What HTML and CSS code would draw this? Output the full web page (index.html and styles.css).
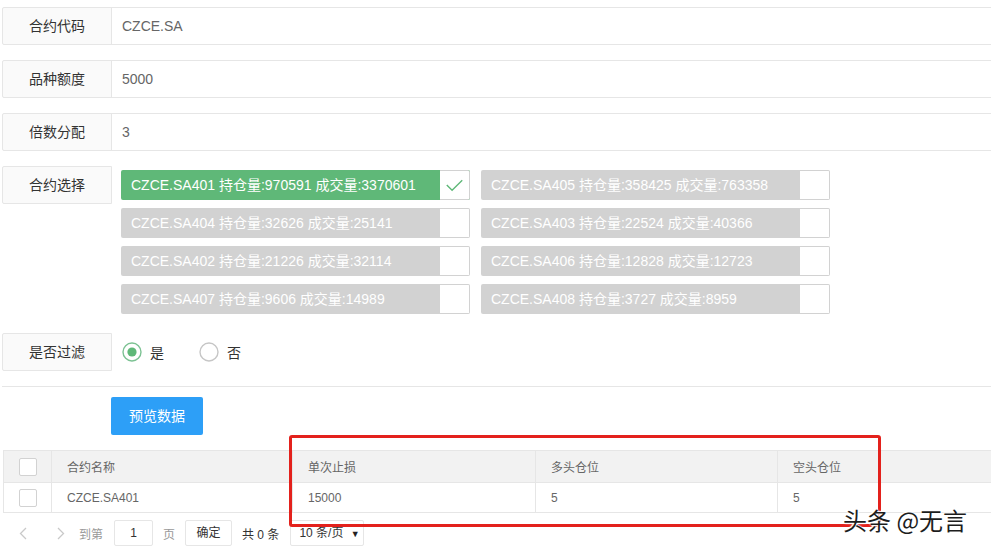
FILE: index.html
```html
<!DOCTYPE html>
<html lang="zh-CN">
<head>
<meta charset="utf-8">
<title>合约设置</title>
<link rel="stylesheet" href="styles.css">
</head>
<body>
<div class="page">
  <form class="form">
    <div class="form-item">
      <label class="form-label">合约代码</label>
      <div class="input">CZCE.SA</div>
    </div>
    <div class="form-item">
      <label class="form-label">品种额度</label>
      <div class="input">5000</div>
    </div>
    <div class="form-item">
      <label class="form-label">倍数分配</label>
      <div class="input">3</div>
    </div>
    <div class="form-item">
      <label class="form-label">合约选择</label>
      <div class="checks">
        <div class="check checked"><span class="check-text">CZCE.SA401 持仓量:970591 成交量:3370601</span><i class="check-box"><svg width="30" height="28" viewBox="0 0 30 28"><polyline points="7,14 12.5,19.5 23,9" fill="none" stroke="#5FB878" stroke-width="1.4"/></svg></i></div>
        <div class="check"><span class="check-text">CZCE.SA405 持仓量:358425 成交量:763358</span><i class="check-box"></i></div>
        <div class="check"><span class="check-text">CZCE.SA404 持仓量:32626 成交量:25141</span><i class="check-box"></i></div>
        <div class="check"><span class="check-text">CZCE.SA403 持仓量:22524 成交量:40366</span><i class="check-box"></i></div>
        <div class="check"><span class="check-text">CZCE.SA402 持仓量:21226 成交量:32114</span><i class="check-box"></i></div>
        <div class="check"><span class="check-text">CZCE.SA406 持仓量:12828 成交量:12723</span><i class="check-box"></i></div>
        <div class="check"><span class="check-text">CZCE.SA407 持仓量:9606 成交量:14989</span><i class="check-box"></i></div>
        <div class="check"><span class="check-text">CZCE.SA408 持仓量:3727 成交量:8959</span><i class="check-box"></i></div>
      </div>
    </div>
    <div class="form-item">
      <label class="form-label">是否过滤</label>
      <div class="radios">
        <span class="radio"><svg width="20" height="20" viewBox="0 0 20 20"><circle cx="10" cy="10" r="9" fill="none" stroke="#7cc293" stroke-width="1.4"/><circle cx="10" cy="10" r="4.6" fill="#5FB878"/></svg><span class="radio-text">是</span></span>
        <span class="radio"><svg width="20" height="20" viewBox="0 0 20 20"><circle cx="10" cy="10" r="9" fill="none" stroke="#c6c6c6" stroke-width="1.4"/></svg><span class="radio-text">否</span></span>
      </div>
    </div>
    <hr class="sep">
    <div class="btn-row"><button type="button" class="btn">预览数据</button></div>
  </form>

  <div class="table-wrap">
    <table class="table">
      <colgroup><col class="c0"><col class="c1"><col class="c2"><col class="c3"><col class="c4"></colgroup>
      <thead>
        <tr><th class="cb-cell"><span class="cb"></span></th><th>合约名称</th><th>单次止损</th><th>多头仓位</th><th>空头仓位</th></tr>
      </thead>
      <tbody>
        <tr><td class="cb-cell"><span class="cb"></span></td><td>CZCE.SA401</td><td>15000</td><td>5</td><td>5</td></tr>
      </tbody>
    </table>
    <div class="pager">
      <span class="pg-arrow"><svg width="8" height="13" viewBox="0 0 8 13"><polyline points="7,1 1.5,6.5 7,12" fill="none" stroke="#c9c9c9" stroke-width="1.3"/></svg></span>
      <span class="pg-arrow next"><svg width="8" height="13" viewBox="0 0 8 13"><polyline points="1,1 6.5,6.5 1,12" fill="none" stroke="#c9c9c9" stroke-width="1.3"/></svg></span>
      <span class="pg-text">到第</span>
      <span class="pg-input">1</span>
      <span class="pg-text">页</span>
      <span class="pg-btn">确定</span>
      <span class="pg-count">共 0 条</span>
      <span class="pg-select">10 条/页 <span class="caret">▼</span></span>
    </div>
  </div>

  <div class="annot"></div>
  <div class="watermark">头条 @无言</div>
</div>
</body>
</html>
```

FILE: styles.css
```css
html, body {
  margin: 0;
  padding: 0;
  overflow: hidden;
  background: #fff;
}
body {
  font-family: "Liberation Sans", "Noto Sans CJK SC", sans-serif;
  font-size: 14px;
  color: #333;
}
.page {
  position: relative;
  width: 991px;
  height: 551px;
  overflow: hidden;
}
.form {
  padding: 7px 0 0 2px;
  width: 1200px;
}
.form-item {
  display: flex;
  align-items: flex-start;
  margin-bottom: 15px;
}
.form-label {
  box-sizing: border-box;
  width: 110px;
  height: 38px;
  line-height: 20px;
  padding: 8px 0;
  text-align: center;
  background: #fafafa;
  border: 1px solid #e6e6e6;
  border-radius: 2px 0 0 2px;
  flex: none;
  color: #333;
}
.input {
  box-sizing: border-box;
  flex: 1;
  height: 38px;
  line-height: 36px;
  margin-left: -1px;
  padding-left: 10px;
  border: 1px solid #e6e6e6;
  color: #666;
}
.checks {
  display: grid;
  grid-template-columns: 349px 349px;
  column-gap: 11px;
  row-gap: 8px;
  margin: 4px 0 4px 9px;
}
.check {
  display: flex;
  height: 30px;
  border-radius: 2px;
  background: #d2d2d2;
  overflow: hidden;
}
.check.checked {
  background: #5FB878;
}
.check-text {
  flex: 1;
  padding-left: 10px;
  line-height: 30px;
  color: #fff;
  white-space: nowrap;
  overflow: hidden;
}
.check-box {
  box-sizing: border-box;
  width: 30px;
  height: 30px;
  flex: none;
  background: #fff;
  border: 1px solid #d2d2d2;
  border-left: none;
  border-radius: 0 2px 2px 0;
  display: flex;
  align-items: center;
  justify-content: center;
}
.check-box svg {
  display: block;
}
.radios {
  display: flex;
  align-items: center;
  height: 38px;
  margin-left: 10px;
}
.radio {
  display: flex;
  align-items: center;
  margin-right: 35px;
}
.radio svg {
  display: block;
}
.radio-text {
  margin-left: 8px;
  color: #333;
}
.sep {
  margin: 0;
  border: 0;
  border-top: 1px solid #e6e6e6;
  height: 0;
}
.btn-row {
  padding: 10px 0 0 109px;
}
.btn {
  height: 38px;
  padding: 0 18px;
  border: 0;
  border-radius: 2px;
  background: #2d9ff7;
  color: #fff;
  font-family: "Liberation Sans", "Noto Sans CJK SC", sans-serif;
  font-size: 14px;
  line-height: 38px;
}
.table-wrap {
  margin: 15px 0 0 3px;
  width: 1200px;
}
.table {
  border-collapse: collapse;
  table-layout: fixed;
  width: 1100px;
  font-size: 12px;
  color: #666;
}
.c0 { width: 48px; }
.c1 { width: 241px; }
.c2 { width: 243px; }
.c3 { width: 242px; }
.c4 { width: 326px; }
.table th, .table td {
  border: 1px solid #e6e6e6;
  padding: 0 15px;
  text-align: left;
  font-weight: normal;
  white-space: nowrap;
}
.table th {
  height: 31px;
  background: #f2f2f2;
}
.table td {
  height: 29px;
}
.table .cb-cell {
  padding: 0;
  text-align: center;
}
.cb {
  display: inline-block;
  box-sizing: border-box;
  width: 18px;
  height: 18px;
  border: 1px solid #d2d2d2;
  border-radius: 2px;
  background: #fff;
  vertical-align: middle;
}
.pager {
  display: flex;
  align-items: center;
  height: 26px;
  margin-top: 7px;
  font-size: 12px;
  color: #999;
}
.pg-arrow {
  display: flex;
  align-items: center;
  margin-left: 16px;
}
.pg-arrow.next {
  margin-left: 30px;
}
.pg-arrow svg {
  display: block;
}
.pg-text {
  margin-left: 14px;
  color: #999;
}
.pg-text + .pg-input {
  margin-left: 11px;
}
.pg-input {
  box-sizing: border-box;
  width: 39px;
  height: 26px;
  line-height: 24px;
  text-align: center;
  border: 1px solid #e6e6e6;
  border-radius: 2px;
  color: #333;
}
.pg-input + .pg-text {
  margin-left: 10px;
}
.pg-btn {
  box-sizing: border-box;
  margin-left: 10px;
  width: 47px;
  height: 26px;
  line-height: 24px;
  text-align: center;
  border: 1px solid #e6e6e6;
  border-radius: 2px;
  color: #333;
}
.pg-count {
  margin-left: 10px;
  color: #333;
}
.pg-select {
  box-sizing: border-box;
  margin-left: 11px;
  width: 74px;
  height: 26px;
  line-height: 24px;
  padding-left: 8px;
  border: 1px solid #e6e6e6;
  border-radius: 2px;
  color: #333;
  white-space: nowrap;
}
.caret {
  font-size: 9px;
  margin-left: 4px;
  color: #222;
}
.annot {
  position: absolute;
  left: 289px;
  top: 435px;
  width: 592px;
  height: 92px;
  box-sizing: border-box;
  border: 3px solid #e3211c;
  border-radius: 3px;
}
.watermark {
  position: absolute;
  left: 843px;
  top: 505px;
  font-family: "Noto Sans CJK SC", sans-serif;
  font-size: 24px;
  line-height: 30px;
  color: #1d1d1d;
  text-shadow: 0 0 2px #fff, 0 0 2px #fff, 1px 1px 1px #fff, -1px -1px 1px #fff;
  white-space: nowrap;
}
```
